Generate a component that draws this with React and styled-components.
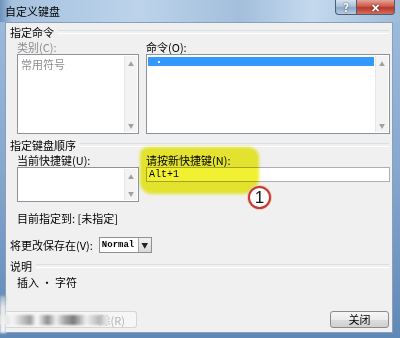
import React from "react";
import styled, { createGlobalStyle } from "styled-components";

const Global = createGlobalStyle`
  body {
    margin: 0;
    font-family: "Noto Sans CJK SC", "Liberation Sans", sans-serif;
  }
  * {
    box-sizing: border-box;
  }
`;

const Window = styled.div`
  position: relative;
  width: 400px;
  height: 338px;
  overflow: hidden;
  display: flex;
  flex-direction: column;
  background: linear-gradient(to bottom, #9fbcdd 0%, #86a7cf 50%, #5f88b7 100%);
`;

const TitleBar = styled.div`
  height: 22px;
  display: flex;
  align-items: flex-start;
  padding-left: 5px;
  background: linear-gradient(
    to right,
    #6f92bc 0%,
    #a7c2df 3%,
    #bcd3ea 35%,
    #a3bfdc 60%,
    #c4d9ed 78%,
    #9fbbd9 100%
  );
`;

const Title = styled.div`
  flex: 1;
  font-size: 11px;
  line-height: 22px;
  color: #000;
`;

const Controls = styled.div`
  display: flex;
  margin-right: 5px;
`;

const CaptionButton = styled.div`
  height: 15px;
  width: ${(p) => p.$w}px;
  display: flex;
  align-items: center;
  justify-content: center;
  font-size: 11px;
  font-weight: bold;
  color: #fff;
  border: 1px solid #4d5d72;
  border-top: none;
  background: ${(p) =>
    p.$close
      ? "linear-gradient(to bottom, #e3a595 0%, #cc5a4a 45%, #b8362a 55%, #d4705e 100%)"
      : "linear-gradient(to bottom, #d5e2f0 0%, #aac0da 45%, #8ea8c8 55%, #b7cbe2 100%)"};
  border-radius: ${(p) => (p.$close ? "0 0 4px 0" : "0 0 0 4px")};
  border-left: ${(p) => (p.$close ? "none" : "1px solid #4d5d72")};
  text-shadow: 0 0 2px #333;
`;

const Client = styled.div`
  flex: 1;
  margin: 0 7px 5px 5px;
  background: #f0f0f0;
  border: 1px solid #8a9fb8;
  padding-top: 2px;
  display: flex;
  flex-direction: column;
  font-size: 11px;
  color: #000;
`;

const Heading = styled.div`
  display: flex;
  align-items: center;
  gap: 4px;
  height: 14px;
  line-height: 14px;
  margin: ${(p) => p.$mt || 0}px 3px 0 4px;
  white-space: nowrap;

  &::after {
    content: "";
    flex: 1;
    height: 2px;
    border-top: 1px solid #d8dfe6;
    border-bottom: 1px solid #ffffff;
  }
`;

const Pair = styled.div`
  position: relative;
  display: grid;
  grid-template-columns: 122px 244px;
  column-gap: 7px;
  padding-left: 11px;
  margin-top: 1px;
`;

const Cell = styled.div`
  position: relative;
  display: flex;
  flex-direction: column;
`;

const Label = styled.div`
  height: 14px;
  line-height: 14px;
  white-space: nowrap;
  color: ${(p) => (p.$disabled ? "#8d8d8d" : "#000")};
`;

const ListBox = styled.div`
  height: ${(p) => p.$h}px;
  border: 1px solid #8e939b;
  background: #fff;
  display: flex;
`;

const Items = styled.div`
  flex: 1;
  padding: 2px 1px 0 1px;
`;

const Item = styled.div`
  height: ${(p) => (p.$selected ? 9 : 14)}px;
  line-height: ${(p) => (p.$selected ? 9 : 14)}px;
  padding-left: ${(p) => (p.$selected ? 6 : 2)}px;
  font-size: ${(p) => (p.$selected ? 10 : 11)}px;
  color: ${(p) => (p.$selected ? "#fff" : p.$disabled ? "#8d8d8d" : "#000")};
  background: ${(p) => (p.$selected ? "#3399ff" : "transparent")};
`;

const ScrollBar = styled.div`
  width: 13px;
  margin: 1px 1px 1px 0;
  background: #f3f3f3;
  border-left: 1px solid #e6e6e6;
  display: flex;
  flex-direction: column;
  justify-content: space-between;
  align-items: center;
  padding: 5px 0 3px;
  font-size: 6px;
  line-height: 6px;
  color: #a0a0a0;
`;

const Input = styled.div`
  height: 15px;
  border: 1px solid #a9b0b8;
  background: #fff;
  padding-left: 2px;
  font-family: "Liberation Mono", monospace;
  font-size: 10px;
  line-height: 13px;
`;

const Highlight = styled.div`
  position: absolute;
  left: -6px;
  top: -6px;
  width: 119px;
  height: 47px;
  background: #f1f132;
  border-radius: 8px 10px 16px 12px;
  filter: blur(1.5px);
  mix-blend-mode: multiply;
  pointer-events: none;
`;

const Marker = styled.div`
  position: absolute;
  left: 102px;
  top: 33px;
  width: 23px;
  height: 23px;
  border-radius: 50%;
  border: 2px solid #c23a30;
  background: #fff;
  box-shadow: 0 0 0 1px #f2c4c0;
  display: flex;
  align-items: center;
  justify-content: center;
  font-family: "Liberation Sans", sans-serif;
  font-size: 17px;
  color: #111;
`;

const Line = styled.div`
  height: 14px;
  line-height: 14px;
  margin: ${(p) => p.$mt || 0}px 0 0 ${(p) => p.$ml || 11}px;
  white-space: nowrap;
`;

const SaveRow = styled.div`
  display: flex;
  align-items: center;
  gap: 6px;
  margin: 12px 0 0 4px;
  height: 16px;
`;

const Select = styled.div`
  width: 53px;
  height: 16px;
  border: 1px solid #8f8f8f;
  background: #fff;
  display: flex;
`;

const SelectValue = styled.div`
  flex: 1;
  padding-left: 2px;
  font-family: "Liberation Mono", monospace;
  font-weight: bold;
  font-size: 9px;
  line-height: 14px;
`;

const SelectArrow = styled.div`
  width: 13px;
  border-left: 1px solid #a5a5a5;
  background: linear-gradient(to bottom, #f2f2f2, #d9d9d9);
  display: flex;
  align-items: center;
  justify-content: center;
  font-size: 7px;
  color: #222;
`;

const ButtonRow = styled.div`
  margin-top: auto;
  margin-bottom: 4px;
  display: flex;
  justify-content: space-between;
  align-items: center;
  padding-right: 3px;
`;

const Button = styled.div`
  width: ${(p) => p.$w}px;
  height: 17px;
  border: 1px solid #8a8a8a;
  border-radius: 3px;
  background: linear-gradient(to bottom, #f6f6f6 0%, #ebebeb 50%, #dddddd 51%, #d0d0d0 100%);
  display: flex;
  align-items: center;
  justify-content: center;
  font-size: 11px;
  line-height: 15px;
  color: #000;
`;

const SmearButton = styled.div`
  position: relative;
  width: 131px;
  height: 17px;
  border: 1px solid #d4d4d4;
  border-left: none;
  border-radius: 0 3px 3px 0;
  background: #f6f6f6;
  display: flex;
  align-items: center;
  justify-content: flex-end;
  padding-right: 11px;
  font-size: 11px;
  color: #b3b3b3;

  &::before {
    content: "";
    position: absolute;
    left: -6px;
    top: 3px;
    width: 108px;
    height: 10px;
    filter: blur(1.2px);
    background: linear-gradient(
      to right,
      #d8d8d8 0%,
      #f4f4f4 12%,
      #9c9c9c 28%,
      #ffffff 34%,
      #8e8e8e 44%,
      #efefef 52%,
      #a7a7a7 60%,
      #7b7b7b 68%,
      #f0f0f0 80%,
      #b5b5b5 92%,
      #f3f3f3 100%
    );
  }
`;

const CornerSmear = styled.div`
  position: absolute;
  left: 0;
  top: 296px;
  width: 6px;
  height: 37px;
  background: linear-gradient(to bottom, #9fb4cc, #e9e9e9 30%, #f4f4f4);
  filter: blur(1px);
`;

export default function App() {
  return (
    <>
      <Global />
      <Window>
        <TitleBar>
          <Title>自定义键盘</Title>
          <Controls>
            <CaptionButton $w={22}>?</CaptionButton>
            <CaptionButton $w={38} $close>
              ✕
            </CaptionButton>
          </Controls>
        </TitleBar>
        <Client>
          <Heading>指定命令</Heading>
          <Pair>
            <Cell>
              <Label $disabled>类别(C):</Label>
              <ListBox $h={80}>
                <Items>
                  <Item $disabled>常用符号</Item>
                </Items>
                <ScrollBar>
                  <span>▲</span>
                  <span>▼</span>
                </ScrollBar>
              </ListBox>
            </Cell>
            <Cell>
              <Label>命令(O):</Label>
              <ListBox $h={80}>
                <Items>
                  <Item $selected>·</Item>
                </Items>
                <ScrollBar>
                  <span>▲</span>
                  <span>▼</span>
                </ScrollBar>
              </ListBox>
            </Cell>
          </Pair>

          <Heading $mt={4}>指定键盘顺序</Heading>
          <Pair>
            <Cell>
              <Label>当前快捷键(U):</Label>
              <ListBox $h={35}>
                <Items />
                <ScrollBar>
                  <span>▲</span>
                  <span>▼</span>
                </ScrollBar>
              </ListBox>
            </Cell>
            <Cell>
              <Label>请按新快捷键(N):</Label>
              <Input>Alt+1</Input>
              <Highlight />
              <Marker>1</Marker>
            </Cell>
          </Pair>

          <Line $mt={9}>目前指定到: [未指定]</Line>

          <SaveRow>
            <span>将更改保存在(V):</span>
            <Select>
              <SelectValue>Normal</SelectValue>
              <SelectArrow>▼</SelectArrow>
            </Select>
          </SaveRow>

          <Heading $mt={6}>说明</Heading>
          <Line $mt={2}>插入 · 字符</Line>

          <ButtonRow>
            <SmearButton>除(R)</SmearButton>
            <Button $w={59}>关闭</Button>
          </ButtonRow>
        </Client>
        <CornerSmear />
      </Window>
    </>
  );
}
